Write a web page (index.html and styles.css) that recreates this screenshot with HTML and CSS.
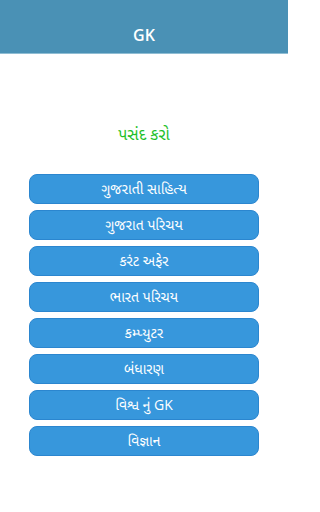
FILE: index.html
```html
<!DOCTYPE html>
<html lang="gu">
<head>
<meta charset="utf-8">
<link rel="stylesheet" href="styles.css">
</head>
<body>
<header class="appbar"><span class="appbar-title">GK</span></header>
<main class="content">
  <h1 class="heading">પસંદ કરો</h1>
  <nav class="menu">
    <button class="menu-btn">ગુજરાતી સાહિત્ય</button>
    <button class="menu-btn">ગુજરાત પરિચય</button>
    <button class="menu-btn">કરંટ અફેર</button>
    <button class="menu-btn">ભારત પરિચય</button>
    <button class="menu-btn">કમ્પ્યુટર</button>
    <button class="menu-btn">બંધારણ</button>
    <button class="menu-btn">વિશ્વ નું GK</button>
    <button class="menu-btn">વિજ્ઞાન</button>
  </nav>
</main>
</body>
</html>
```
FILE: styles.css
```css
* { box-sizing: border-box; }
html, body { margin: 0; padding: 0; background: #ffffff; }
body {
  width: 288px;
  height: 512px;
  overflow: hidden;
  font-family: "Open Sans", "Noto Sans Gujarati", "Noto Sans", sans-serif;
}
.appbar {
  height: 54px;
  background: #4a91b5;
  border-bottom: 1px solid #8fbdd3;
  display: flex;
  align-items: flex-end;
  justify-content: center;
  padding-bottom: 8px;
}
.appbar-title {
  color: #ffffff;
  font-size: 16px;
  font-weight: 600;
  line-height: 20px;
}
.content {
  display: flex;
  flex-direction: column;
  align-items: center;
}
.heading {
  margin: 66px 0 0;
  height: 28px;
  line-height: 28px;
  color: #1fbf2a;
  font-size: 16px;
  font-weight: 400;
}
.menu {
  margin-top: 26px;
  display: flex;
  flex-direction: column;
  gap: 6px;
  width: 230px;
}
.menu-btn {
  height: 30px;
  border: 1px solid #2b86cf;
  border-radius: 8px;
  background: #3797dc;
  color: #ffffff;
  font-family: inherit;
  font-size: 14px;
  padding: 0;
  line-height: 28px;
}
```
